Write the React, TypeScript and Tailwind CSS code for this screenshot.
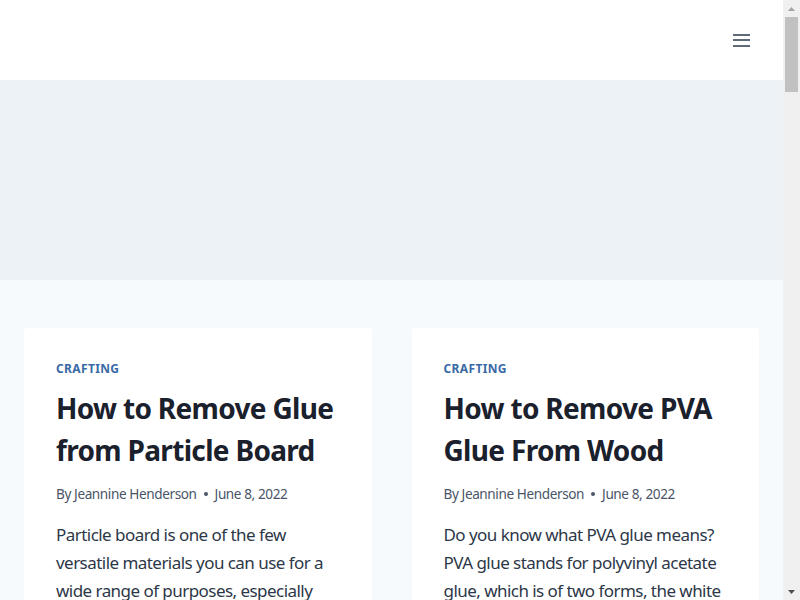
import React from "react";

const font = { fontFamily: '"Noto Sans", "Open Sans", sans-serif' };

function Card({ title, body }: { title: string[]; body: string[] }) {
  return (
    <article className="bg-white rounded-[4px] px-8 pt-8 pb-8 shadow-[0_15px_15px_-10px_rgba(0,0,0,0.05)]">
      <div className="text-[12px] leading-[18px] font-bold tracking-[0.03em] uppercase text-[#3a6aa6]">Crafting</div>
      <h2 className="mt-[9px] text-[28px] leading-[42px] font-bold tracking-[-0.024em] text-[#1a202c] whitespace-nowrap">
        {title.map((t, i) => (
          <div key={i}>{t}</div>
        ))}
      </h2>
      <div className="mt-[13px] flex items-center text-[13.6px] leading-[20px] tracking-[-0.03em] text-[#4a5568] whitespace-nowrap">
        <span>By Jeannine Henderson</span>
        <span className="mx-[7px] block w-[4px] h-[4px] rounded-full bg-[#4a5568]" />
        <span>June 8, 2022</span>
      </div>
      <div className="mt-[17px] text-[17px] leading-[28px] tracking-[-0.032em] text-[#2d3748] whitespace-nowrap">
        {body.map((t, i) => (
          <div key={i}>{t}</div>
        ))}
      </div>
    </article>
  );
}

export default function App() {
  return (
    <div className="flex h-[600px] overflow-hidden bg-[#f7fafc]" style={font}>
      <main className="flex-1 flex flex-col min-w-0">
        <header className="h-[80px] bg-white flex items-center justify-end pr-[33px] shrink-0">
          <div className="flex flex-col gap-[3.5px] w-[17px]">
            <span className="block h-[2px] bg-[#5f6b7a]" />
            <span className="block h-[2px] bg-[#5f6b7a]" />
            <span className="block h-[2px] bg-[#5f6b7a]" />
          </div>
        </header>
        <section className="h-[200px] bg-[#edf2f7] shrink-0" />
        <section className="px-6 pt-12 grid grid-cols-2 gap-10 items-start">
          <Card
            title={["How to Remove Glue", "from Particle Board"]}
            body={[
              "Particle board is one of the few",
              "versatile materials you can use for a",
              "wide range of purposes, especially",
            ]}
          />
          <Card
            title={["How to Remove PVA", "Glue From Wood"]}
            body={[
              "Do you know what PVA glue means?",
              "PVA glue stands for polyvinyl acetate",
              "glue, which is of two forms, the white",
            ]}
          />
        </section>
      </main>
      <aside className="w-[17px] shrink-0 bg-[#f0f0f0] flex flex-col items-center">
        <div className="h-[17px] w-full flex items-center justify-center">
          <svg width="7" height="4" viewBox="0 0 7 4"><path d="M0 4 L3.5 0 L7 4 Z" fill="#a3a3a3" /></svg>
        </div>
        <div className="w-[13px] h-[75px] bg-[#c1c1c1]" />
        <div className="flex-1" />
        <div className="h-[17px] w-full flex items-center justify-center">
          <svg width="7" height="4" viewBox="0 0 7 4"><path d="M0 0 L7 0 L3.5 4 Z" fill="#505050" /></svg>
        </div>
      </aside>
    </div>
  );
}
